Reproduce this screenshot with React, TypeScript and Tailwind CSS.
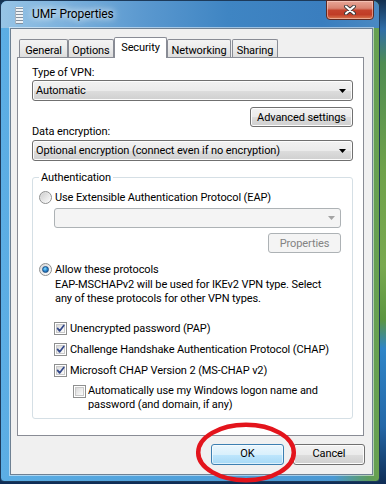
import React from "react";

function Radio({ checked }: { checked?: boolean }) {
  return (
    <div className="w-[13px] h-[13px] rounded-full border border-[#8e8f8f] bg-[linear-gradient(135deg,#d6d6d6_0%,#eeeeee_55%,#ffffff_100%)] flex items-center justify-center shrink-0">
      {checked ? (
        <div className="w-[7px] h-[7px] rounded-full bg-[radial-gradient(circle_at_40%_35%,#8ae0ff_0%,#2f8fd6_45%,#12457f_100%)] border border-[#1a4f86]" />
      ) : (
        <div className="w-[9px] h-[9px] rounded-full bg-[linear-gradient(135deg,#cfcfcf_0%,#e9e9e9_60%,#f8f8f8_100%)]" />
      )}
    </div>
  );
}

function Check({ checked }: { checked?: boolean }) {
  return (
    <div className="w-[13px] h-[13px] border border-[#8e8f8f] bg-white p-[1px] shrink-0">
      <div className="w-full h-full border border-[#c9c9c9] bg-[linear-gradient(135deg,#d9d9d9_0%,#efefef_60%,#fbfbfb_100%)] relative">
        {checked && (
          <svg width="11" height="11" viewBox="0 0 11 11" className="absolute -left-[2px] -top-[2px]">
            <polyline points="2.6,5.4 4.6,7.9 8.8,2.4" fill="none" stroke="#34498a" strokeWidth="1.7" strokeLinejoin="round" strokeLinecap="round" />
          </svg>
        )}
      </div>
    </div>
  );
}

function Arrow({ color }: { color: string }) {
  return (
    <svg width="7" height="4" viewBox="0 0 7 4" className="shrink-0">
      <polygon points="0,0 7,0 3.5,4" fill={color} />
    </svg>
  );
}

export default function App() {
  return (
    <div className="relative w-[386px] h-[484px] overflow-hidden bg-[linear-gradient(180deg,#13304f_0%,#2f6ea8_6%,#4f8c52_13%,#6fa24a_35%,#79a94f_55%,#5b9640_66%,#2f86c8_72%,#2468a8_88%,#0f2d55_100%)] font-['Roboto',sans-serif] text-[11px] tracking-[-0.1px] text-black">
      <div className="flex flex-col w-[380px] h-[482px] rounded-t-[7px] rounded-b-[4px] border border-[#1d3a5a] bg-[linear-gradient(90deg,#5caee4_0%,#51a2dc_40%,#4a98d3_88%,#5c9c62_97%,#6aa24c_100%)]">
        <div className="flex items-start h-[27px] rounded-t-[6px] bg-[linear-gradient(90deg,#97c4e6_0%,#79b0dc_18%,#5a98cf_38%,#3f85c3_60%,#3a7ebf_85%,#4a89c2_100%)]">
          <svg width="8" height="17" viewBox="0 0 8 17" className="ml-[14px] mt-[6px] shrink-0">
            <rect x="0" y="0" width="8" height="17" fill="#eef2f5" />
            <rect x="0" y="1" width="8" height="1" fill="#8391a0" />
            <rect x="0" y="4" width="8" height="1" fill="#8391a0" />
            <rect x="0" y="7" width="8" height="1" fill="#8391a0" />
            <rect x="0" y="10" width="8" height="1" fill="#8391a0" />
            <rect x="0" y="13" width="8" height="1" fill="#8391a0" />
            <rect x="0" y="16" width="8" height="1" fill="#8391a0" />
            <rect x="0" y="0" width="1" height="17" fill="#a7b2bd" />
          </svg>
          <span className="ml-[9px] mt-[6px] text-[12px] leading-[15px] [text-shadow:0_0_6px_rgba(255,255,255,0.95),0_0_10px_rgba(255,255,255,0.8)]">UMF Properties</span>
          <div className="ml-auto mr-[5px] -mt-[1px] w-[48px] h-[20px] rounded-b-[4px] border border-[#5e2a22] bg-[linear-gradient(180deg,#e8a697_0%,#d98472_40%,#c4432d_52%,#c03c26_75%,#d9784f_100%)] shadow-[inset_0_0_0_1px_rgba(255,220,210,0.5)] flex items-center justify-center">
            <svg width="12" height="10" viewBox="0 0 12 10">
              <path d="M2 1.5 L10 8.5 M10 1.5 L2 8.5" stroke="#3b3b3b" strokeWidth="3.8" strokeLinecap="round" />
              <path d="M2 1.5 L10 8.5 M10 1.5 L2 8.5" stroke="#ffffff" strokeWidth="2.1" strokeLinecap="round" />
            </svg>
          </div>
        </div>

        <div className="ml-[9px] mr-[6px] border border-[#6f8193] shadow-[0_0_0_1px_rgba(255,255,255,0.5)] bg-[#f0f0f0] pt-[8px] pb-[9px]">
          <div className="flex items-end h-[20px] ml-[8px]">
            <div className="w-[49px] h-[18px] border border-b-0 border-[#898c95] rounded-t-[2px] bg-[linear-gradient(180deg,#f3f3f3_0%,#ebebeb_50%,#dddddd_100%)] flex items-center justify-center pt-[3px] leading-[15px]">General</div>
            <div className="w-[46px] h-[18px] border border-b-0 border-[#898c95] rounded-t-[2px] bg-[linear-gradient(180deg,#f3f3f3_0%,#ebebeb_50%,#dddddd_100%)] flex items-center justify-center pt-[3px] leading-[15px]">Options</div>
            <div className="relative z-10 w-[53px] h-[21px] -mb-[1px] border border-b-0 border-[#898c95] rounded-t-[2px] bg-white flex items-center justify-center pb-[1px] leading-[15px]">Security</div>
            <div className="w-[64px] h-[18px] border border-b-0 border-[#898c95] rounded-t-[2px] bg-[linear-gradient(180deg,#f3f3f3_0%,#ebebeb_50%,#dddddd_100%)] flex items-center justify-center pt-[3px] leading-[15px]">Networking</div>
            <div className="w-[46px] h-[18px] ml-[1px] border border-b-0 border-[#898c95] rounded-t-[2px] bg-[linear-gradient(180deg,#f3f3f3_0%,#ebebeb_50%,#dddddd_100%)] flex items-center justify-center pt-[3px] leading-[15px]">Sharing</div>
          </div>

          <div className="ml-[6px] w-[347px] h-[379px] border border-[#898c95] bg-white pl-[14px] pr-[10px] pt-[7px] flex flex-col leading-[15px]">
            <div>Type of VPN:</div>
            <div className="flex items-center h-[21px] rounded-[3px] border border-[#707070] bg-[linear-gradient(180deg,#f2f2f2_0%,#ebebeb_50%,#dddddd_51%,#cfcfcf_100%)] shadow-[inset_0_0_0_1px_#fcfcfc] pl-[3px] pr-[6px]">
              <span className="flex-1">Automatic</span>
              <Arrow color="#000000" />
            </div>
            <div className="flex justify-end mt-[6px]">
              <div className="w-[103px] h-[20px] rounded-[3px] border border-[#707070] bg-[linear-gradient(180deg,#f2f2f2_0%,#ebebeb_50%,#dddddd_51%,#cfcfcf_100%)] shadow-[inset_0_0_0_1px_#fcfcfc] flex items-center justify-center">Advanced settings</div>
            </div>
            <div className="-mt-[3px]">Data encryption:</div>
            <div className="mt-[1px] flex items-center h-[21px] rounded-[3px] border border-[#707070] bg-[linear-gradient(180deg,#f2f2f2_0%,#ebebeb_50%,#dddddd_51%,#cfcfcf_100%)] shadow-[inset_0_0_0_1px_#fcfcfc] pl-[3px] pr-[6px]">
              <span className="flex-1">Optional encryption (connect even if no encryption)</span>
              <Arrow color="#000000" />
            </div>

            <fieldset className="mt-[9px] border border-[#d5dfe5] rounded-[3px] pb-[6px]">
              <legend className="ml-[6px] px-[2px] leading-[15px]">Authentication</legend>
              <div className="flex items-center h-[13px] mt-[6px] pl-[6px] gap-[3px]">
                <Radio />
                <span>Use Extensible Authentication Protocol (EAP)</span>
              </div>
              <div className="ml-[21px] w-[287px]">
                <div className="mt-[4px] h-[20px] rounded-[3px] border border-[#adb2b5] bg-[#f4f4f4] flex items-center justify-end pr-[5px]">
                  <Arrow color="#a3a3a3" />
                </div>
                <div className="flex justify-end mt-[5px]">
                  <div className="w-[73px] h-[20px] rounded-[3px] border border-[#adb2b5] bg-[#f4f4f4] text-[#838383] flex items-center justify-center">Properties</div>
                </div>
              </div>
              <div className="flex items-center h-[13px] mt-[10px] pl-[6px] gap-[3px]">
                <Radio checked />
                <span>Allow these protocols</span>
              </div>
              <div className="ml-[22px] mt-[2px] leading-[14px] whitespace-nowrap">
                <div>EAP-MSCHAPv2 will be used for IKEv2 VPN type. Select</div>
                <div>any of these protocols for other VPN types.</div>
              </div>
              <div className="flex items-center h-[13px] mt-[16px] ml-[21px] gap-[3px] whitespace-nowrap">
                <Check checked />
                <span>Unencrypted password (PAP)</span>
              </div>
              <div className="flex items-center h-[13px] mt-[8px] ml-[21px] gap-[3px] whitespace-nowrap">
                <Check checked />
                <span>Challenge Handshake Authentication Protocol (CHAP)</span>
              </div>
              <div className="flex items-center h-[13px] mt-[8px] ml-[21px] gap-[3px] whitespace-nowrap">
                <Check checked />
                <span>Microsoft CHAP Version 2 (MS-CHAP v2)</span>
              </div>
              <div className="flex items-start mt-[7px] ml-[40px] gap-[2px] whitespace-nowrap">
                <div className="mt-[1px]">
                  <Check />
                </div>
                <div className="leading-[14px]">
                  <div>Automatically use my Windows logon name and</div>
                  <div>password (and domain, if any)</div>
                </div>
              </div>
            </fieldset>
          </div>

          <div className="flex justify-end mt-[8px] pr-[7px] gap-[9px]">
            <div className="w-[73px] h-[21px] rounded-[3px] border border-[#3c7fb1] bg-[linear-gradient(180deg,#eaf6fd_0%,#d9f0fc_50%,#bee6fd_51%,#a7d9f5_100%)] shadow-[inset_0_0_0_1px_rgba(255,255,255,0.6)] flex items-center justify-center">OK</div>
            <div className="w-[72px] h-[21px] rounded-[3px] border border-[#707070] bg-[linear-gradient(180deg,#f2f2f2_0%,#ebebeb_50%,#dddddd_51%,#cfcfcf_100%)] shadow-[inset_0_0_0_1px_#fcfcfc] flex items-center justify-center">Cancel</div>
          </div>
        </div>
      </div>

      <svg width="386" height="484" viewBox="0 0 386 484" className="absolute left-0 top-0 pointer-events-none">
        <ellipse cx="246" cy="452.5" rx="47.8" ry="27.8" fill="none" stroke="#e3141c" strokeWidth="4.5" />
      </svg>
    </div>
  );
}
